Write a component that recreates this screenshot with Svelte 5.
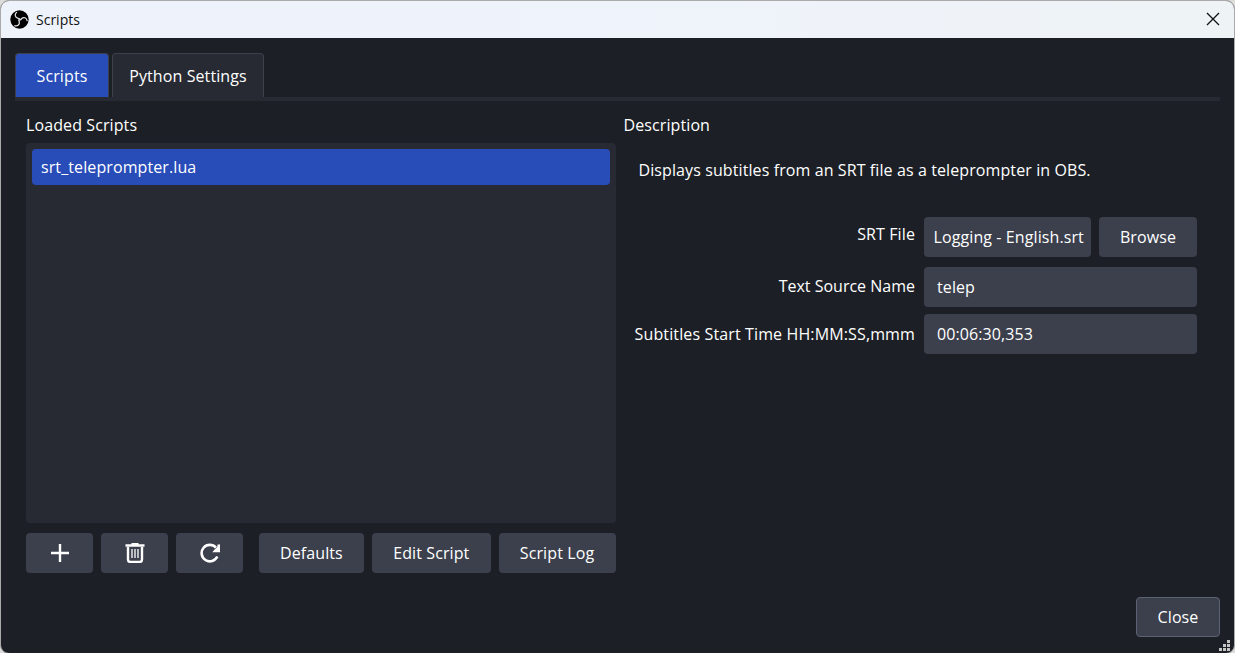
<script>
  let scripts = ['srt_teleprompter.lua'];
  let selected = 0;
  const arms = [0, 120, 240];
</script>

<div class="desktop">
  <div class="window">
    <header>
      <svg class="logo" width="19" height="19" viewBox="0 0 24 24" aria-hidden="true">
        <circle cx="12" cy="12" r="11.6" fill="#000" />
        <g fill="none" stroke="#dfe2e5" stroke-width="1.6" stroke-linecap="round">
          {#each arms as angle}
            <path transform="rotate({angle} 12 12)" d="M8.300 3C5.600 5.500 6.200 9.300 9.600 10.200Q11.500 10.400 12.500 11.600" />
          {/each}
        </g>
      </svg>
      <span class="title">Scripts</span>
      <svg class="x" width="14" height="14" viewBox="0 0 14 14" aria-hidden="true">
        <path d="M1 1L13 13M13 1L1 13" stroke="#111" stroke-width="1.3" />
      </svg>
    </header>

    <nav>
      <div class="tab active" style:width="94px"><span>Scripts</span></div>
      <div class="tab" style:width="152px"><span>Python Settings</span></div>
    </nav>

    <main>
      <section class="left">
        <div class="heading">Loaded Scripts</div>
        <div class="list">
          {#each scripts as name, i}
            <div class="item" class:selected={i === selected}>{name}</div>
          {/each}
        </div>
        <div class="tools">
          <div class="btn icon">
            <svg width="20" height="20" viewBox="0 0 20 20"><path d="M10 1v18M1 10h18" stroke="#fff" stroke-width="2.4" /></svg>
          </div>
          <div class="btn icon">
            <svg width="20" height="20" viewBox="0 0 20 20" fill="none" stroke="#fff">
              <path d="M.5 2.500h19" stroke-width="2.6" />
              <path d="M6.500 1h7" stroke-width="2" />
              <path d="M3 4V16.500Q3 19 5.500 19H14.500Q17 19 17 16.500V4" stroke-width="2.4" />
              <path d="M7 6v9M10 6v9M13 6v9" stroke-width="1.3" />
            </svg>
          </div>
          <div class="btn icon last">
            <svg width="20" height="20" viewBox="0 0 20 20" fill="none" stroke="#fff">
              <path d="M17.300 13.500A8.200 8.200 0 1 1 16 4.700" stroke-width="2.6" />
              <path d="M20 1.200V9.200H12.200L14.800 6.400Z" fill="#fff" stroke="none" />
              <path d="M14 7.900H18.700V1.600" stroke-width="2.4" />
            </svg>
          </div>
          <div class="btn" style:width="105.5px">Defaults</div>
          <div class="btn" style:width="119px">Edit Script</div>
          <div class="btn" style:width="117px">Script Log</div>
        </div>
      </section>

      <section class="right">
        <div class="heading">Description</div>
        <p>Displays subtitles from an SRT file as a teleprompter in OBS.</p>
        <div class="form">
          <div class="row">
            <label for="srt" class="raised">SRT File</label>
            <div id="srt" class="field path">Logging - English.srt</div>
            <div class="btn browse">Browse</div>
          </div>
          <div class="row second">
            <label for="source" class="source">Text Source Name</label>
            <div id="source" class="field">telep</div>
          </div>
          <div class="row">
            <label for="start" class="time">Subtitles Start Time HH:MM:SS,mmm</label>
            <div id="start" class="field">00:06:30,353</div>
          </div>
        </div>
      </section>
    </main>

    <footer><div class="btn close">Close</div></footer>
    <svg class="grip" width="11" height="11" viewBox="0 0 11 11" fill="#c6c6c4">
      <path d="M8 0h3v3h-3zM4 4h3v3h-3zM8 4h3v3h-3zM0 8h3v3h-3zM4 8h3v3h-3zM8 8h3v3h-3z" />
    </svg>
  </div>
</div>

<style>
  :global(body) { margin: 0; }
  .desktop {
    width: 1235px;
    height: 653px;
    background: #dcdcda;
    overflow: hidden;
  }
  .window {
    position: relative;
    box-sizing: border-box;
    width: 1235px;
    height: 654px;
    border: 1px solid #aaa;
    border-radius: 9px;
    overflow: hidden;
    background: #1d1f26;
    color: #fff;
    font: 16px/22px "Open Sans", "Noto Sans", sans-serif;
    letter-spacing: 0.1px;
    white-space: nowrap;
    display: flex;
    flex-direction: column;
  }
  header {
    flex: none;
    height: 37px;
    display: flex;
    align-items: center;
    box-sizing: border-box;
    padding: 0 14px 1px 9px;
    color: #111;
    background: linear-gradient(90deg, #eef3fb, #eff3fa 60%, #eef3f6);
  }
  .title {
    margin-left: 7px;
    padding-top: 2px;
    font: 14px/20px "Open Sans", sans-serif;
    letter-spacing: 0;
  }
  .x { margin-left: auto; }
  nav {
    flex: none;
    display: flex;
    gap: 3px;
    height: 44px;
    margin: 15px 14px 0;
    border-bottom: 4px solid #272a33;
  }
  .tab {
    box-sizing: border-box;
    border: 1px solid #3c404d;
    border-bottom: 0;
    border-radius: 4px 4px 0 0;
    background: #272a33;
    display: flex;
    align-items: center;
    justify-content: center;
    padding-top: 1px;
  }
  .tab.active { background: #284cb8; }
  main {
    flex: none;
    display: flex;
    gap: 7.5px;
    padding: 12px 37px 0 25px;
  }
  .left { width: 590px; }
  .right { flex: 1; }
  .heading { height: 30px; line-height: 24px; }
  .list {
    box-sizing: border-box;
    height: 380px;
    padding: 6px;
    border-radius: 4px;
    background: #272a33;
  }
  .item {
    height: 36px;
    line-height: 36px;
    padding: 0 9px;
    border-radius: 4px;
  }
  .selected { background: #284cb8; }
  .tools {
    display: flex;
    gap: 7.7px;
    margin-top: 10px;
  }
  .btn {
    box-sizing: border-box;
    height: 40px;
    border-radius: 4px;
    background: #3c404d;
    display: flex;
    align-items: center;
    justify-content: center;
    flex: none;
  }
  .icon { width: 67.3px; }
  .last { margin-right: 7.7px; }
  p { margin: 15px 0 0 15px; line-height: 24px; }
  .form {
    display: flex;
    flex-direction: column;
    gap: 7px;
    margin-top: 35px;
  }
  .row { display: flex; justify-content: flex-end; }
  .second { margin-top: 3px; }
  label { flex: 1; margin-right: 9px; text-align: right; line-height: 39px; }
  .raised { line-height: 35px; }
  .source { letter-spacing: 0; }
  .time { line-height: 40px; letter-spacing: 0.13px; }
  .field {
    box-sizing: border-box;
    width: 273px;
    height: 40px;
    line-height: 40px;
    padding: 0 13px;
    border-radius: 4px;
    background: #3c404d;
  }
  .path { width: 167px; padding: 0 5px 0 9.5px; }
  .browse { width: 98px; margin-left: 8px; }
  footer {
    display: flex;
    justify-content: flex-end;
    padding: 24px 14px 0;
  }
  .close { width: 84px; border: 1px solid #5b6273; }
  .grip { position: absolute; right: 4px; bottom: 2px; }
</style>
